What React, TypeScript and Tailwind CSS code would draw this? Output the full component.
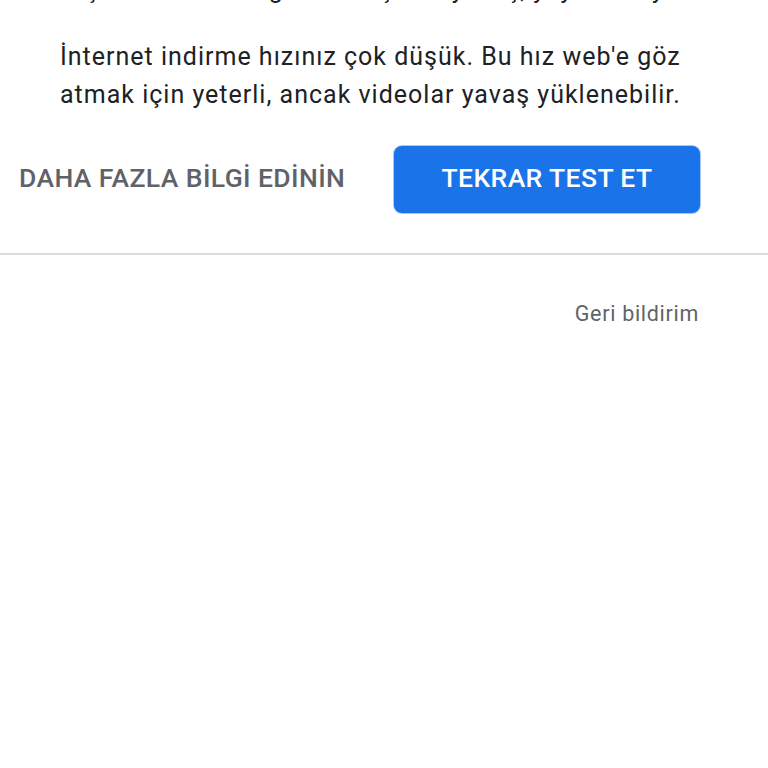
import React from "react";

export default function App() {
  return (
    <div
      className="w-[768px] h-[768px] bg-white overflow-hidden"
      style={{ fontFamily: "Roboto, 'Noto Sans', sans-serif" }}
    >
      <div className="-mt-[29px] pl-[60px] pr-[40px]">
        <p className="text-[25px] leading-[38px] tracking-[1px] text-[#202124] whitespace-nowrap">
          Ölçüm sonucu bağlantınız şu an yavaş, yayın ve oyun
        </p>
        <p className="mt-[29px] text-[25px] leading-[38px] tracking-[1px] text-[#202124]">
          İnternet indirme hızınız çok düşük. Bu hız web'e göz<br />atmak için yeterli, ancak videolar yavaş yüklenebilir.
        </p>
      </div>
      <div className="mt-[32px] flex items-center pl-[19px] pr-[68px]">
        <button className="pb-[4px] text-[26.5px] font-medium text-[#5f6368] tracking-[0.4px] uppercase">
          DAHA FAZLA BİLGİ EDİNİN
        </button>
        <button className="ml-auto w-[306px] h-[67px] pb-[4px] rounded-[8px] bg-[#1a73e8] text-white text-[26.5px] font-medium tracking-[0.4px] shadow-[0_0_0_1px_#a8c7fa]">
          TEKRAR TEST ET
        </button>
      </div>
      <div className="mt-[40px] h-[2px] bg-[#dadce0]" />
      <div className="flex justify-end pr-[69px] pt-[45px]">
        <span className="text-[21.5px] leading-[28px] tracking-[0.7px] text-[#5f6368]">Geri bildirim</span>
      </div>
    </div>
  );
}
